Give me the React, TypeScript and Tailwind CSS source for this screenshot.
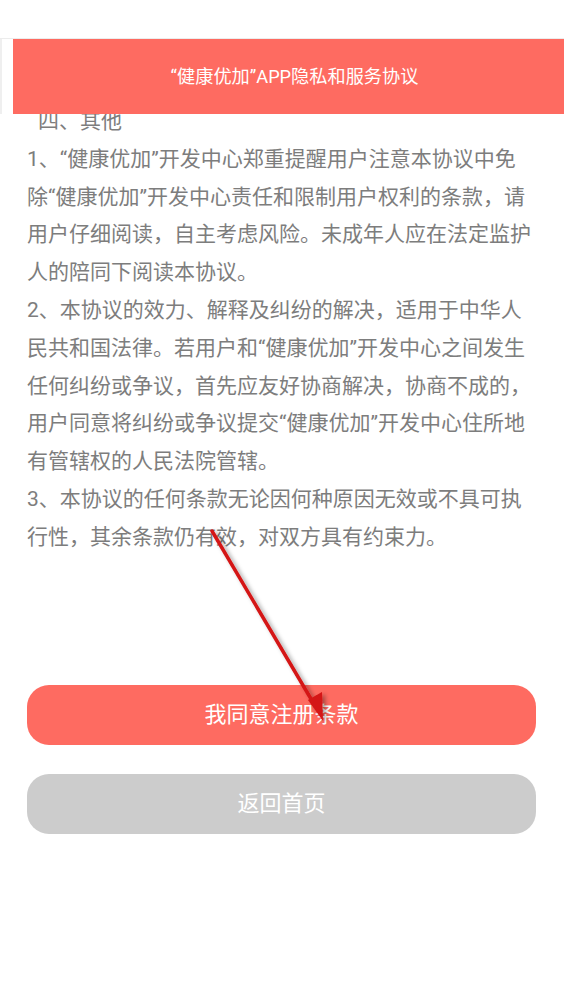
const font = { fontFamily: 'Roboto, "Noto Sans CJK SC", sans-serif' };

const lines: { text: string; indent?: boolean }[] = [
  { text: "四、其他", indent: true },
  { text: "1、“健康优加”开发中心郑重提醒用户注意本协议中免" },
  { text: "除“健康优加”开发中心责任和限制用户权利的条款，请" },
  { text: "用户仔细阅读，自主考虑风险。未成年人应在法定监护" },
  { text: "人的陪同下阅读本协议。" },
  { text: "2、本协议的效力、解释及纠纷的解决，适用于中华人" },
  { text: "民共和国法律。若用户和“健康优加”开发中心之间发生" },
  { text: "任何纠纷或争议，首先应友好协商解决，协商不成的，" },
  { text: "用户同意将纠纷或争议提交“健康优加”开发中心住所地" },
  { text: "有管辖权的人民法院管辖。" },
  { text: "3、本协议的任何条款无论因何种原因无效或不具可执" },
  { text: "行性，其余条款仍有效，对双方具有约束力。" },
];

function Arrow() {
  return (
    <svg
      className="absolute left-0 top-0 pointer-events-none"
      width="564"
      height="1004"
      viewBox="0 0 564 1004"
    >
      <defs>
        <filter id="sh" x="-20%" y="-20%" width="140%" height="140%">
          <feDropShadow dx="3" dy="2" stdDeviation="2" floodColor="#000" floodOpacity="0.35" />
        </filter>
      </defs>
      <g filter="url(#sh)">
        <line x1="212" y1="531" x2="314" y2="704" stroke="#d41414" strokeWidth="3.5" strokeLinecap="round" />
        <polygon points="323,721 308,700 322,692" fill="#d41414" />
      </g>
    </svg>
  );
}

export default function App() {
  return (
    <div className="relative w-[564px] h-[1004px] bg-white overflow-hidden" style={font}>
      <div className="h-[39px] border-b border-[#ececec]" />
      <div className="relative z-10 flex border-l-2 border-[#efefef]">
        <div className="ml-[11px] flex-1 h-[75px] bg-[#fe6b61] flex items-center justify-center">
          <span className="text-white text-[18.2px] pl-[12px]">“健康优加”APP隐私和服务协议</span>
        </div>
      </div>
      <div className="-mt-[11px] pl-[27px] text-[#7d7d7d] text-[21px] leading-[37.8px]">
        {lines.map((l, i) => (
          <div key={i} className={l.indent ? "pl-[11px] whitespace-nowrap" : "whitespace-nowrap"}>
            {l.text}
          </div>
        ))}
      </div>
      <div className="mt-[128px] px-[27px] flex flex-col gap-[29px]">
        <button className="h-[60px] w-[509px] rounded-[22px] bg-[#fe6b61] text-white text-[22px]">
          我同意注册条款
        </button>
        <button className="h-[60px] w-[509px] rounded-[22px] bg-[#cccccc] text-white text-[22px]">
          返回首页
        </button>
      </div>
      <Arrow />
    </div>
  );
}
